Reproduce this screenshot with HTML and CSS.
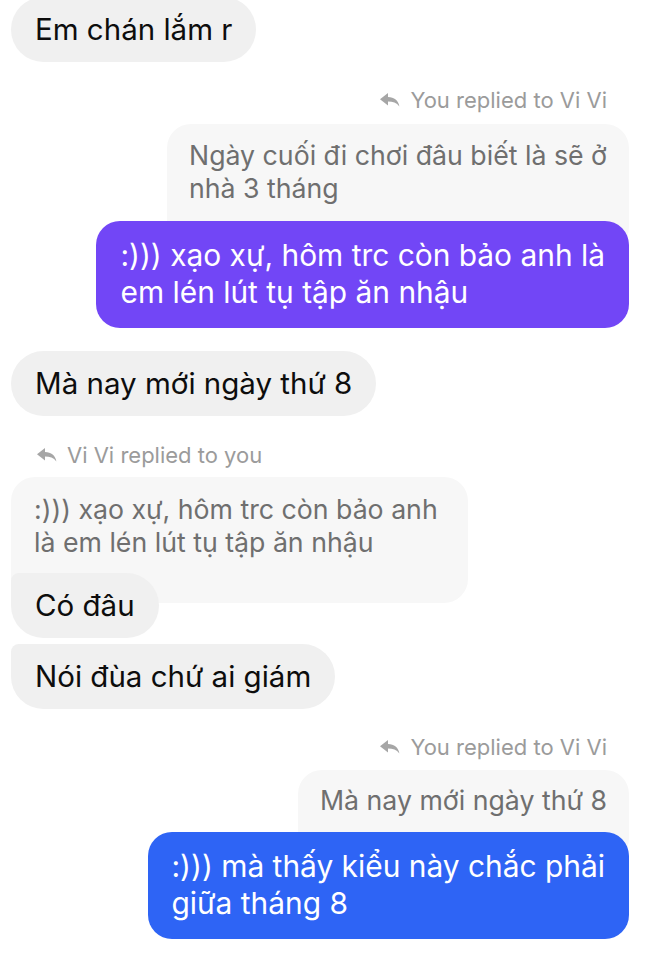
FILE: index.html
```html
<!DOCTYPE html>
<html lang="vi">
<head>
<meta charset="utf-8">
<link rel="stylesheet" href="styles.css">
</head>
<body>
<div class="chat">
  <div class="msg in first">Em chán lắm r</div>

  <div class="label out-label">
    <svg class="reply-icon" viewBox="0 0 20 14"><path d="M0 6.2 L8 0 V3.9 C14.2 4.1 18.4 7.2 19.4 13.4 C16.6 9.9 12.8 8.6 8 8.6 V12.4 Z"/></svg>
    <span>You replied to Vi Vi</span>
  </div>
  <div class="quote out-quote">Ngày cuối đi chơi đâu biết là sẽ ở<br>nhà 3 tháng</div>
  <div class="msg out purple">:))) xạo xự, hôm trc còn bảo anh là<br>em lén lút tụ tập ăn nhậu</div>

  <div class="msg in gap">Mà nay mới ngày thứ 8</div>

  <div class="label in-label">
    <svg class="reply-icon" viewBox="0 0 20 14"><path d="M0 6.2 L8 0 V3.9 C14.2 4.1 18.4 7.2 19.4 13.4 C16.6 9.9 12.8 8.6 8 8.6 V12.4 Z"/></svg>
    <span>Vi Vi replied to you</span>
  </div>
  <div class="quote in-quote">:))) xạo xự, hôm trc còn bảo anh<br>là em lén lút tụ tập ăn nhậu</div>
  <div class="msg in over">Có đâu</div>
  <div class="msg in next">Nói đùa chứ ai giám</div>

  <div class="label out-label">
    <svg class="reply-icon" viewBox="0 0 20 14"><path d="M0 6.2 L8 0 V3.9 C14.2 4.1 18.4 7.2 19.4 13.4 C16.6 9.9 12.8 8.6 8 8.6 V12.4 Z"/></svg>
    <span>You replied to Vi Vi</span>
  </div>
  <div class="quote out-quote q3">Mà nay mới ngày thứ 8</div>
  <div class="msg out blue">:))) mà thấy kiểu này chắc phải<br>giữa tháng 8</div>
</div>
</body>
</html>
```

FILE: styles.css
```css
* { box-sizing: border-box; }
html, body { margin: 0; padding: 0; background: #ffffff; }
body {
  width: 672px;
  height: 960px;
  overflow: hidden;
  font-family: Inter, "Noto Sans", "DejaVu Sans", sans-serif;
}
.chat {
  display: flex;
  flex-direction: column;
  padding: 0 43px 0 11px;
}
.msg {
  position: relative;
  z-index: 1;
  font-size: 29.5px;
  line-height: 35px;
  padding: 15px 24px;
  border-radius: 33px;
  color: #0d0d0d;
}
.msg.in {
  align-self: flex-start;
  background: #f0f0f0;
}
.msg.first { margin-top: -3px; }
.msg.gap { margin-top: 23px; }
.msg.over { margin-top: -30px; border-top-left-radius: 8px; }
.msg.next { margin-top: 6px; border-top-left-radius: 8px; }
.msg.out {
  align-self: flex-end;
  color: #ffffff;
  font-size: 29.9px;
  line-height: 37px;
  padding: 16px 24px 17px;
  border-radius: 24px;
  margin-top: -30px;
}
.purple { background: #7246f6; }
.blue { background: #2e64f5; }

.label {
  display: flex;
  align-items: center;
  gap: 10px;
  font-size: 22px;
  line-height: 24px;
  color: #9b9b9b;
  margin-top: 26px;
}
.out-label { align-self: flex-end; margin-right: 22px; }
.in-label { align-self: flex-start; margin-left: 26px; margin-top: 27px; }
.reply-icon {
  width: 20px;
  height: 14px;
  fill: #a6a6a6;
}

.quote {
  background: #f7f7f7;
  color: #6f6f6f;
  font-size: 26.7px;
  line-height: 33px;
  border-radius: 24px;
  margin-top: 12px;
}
.out-quote {
  align-self: flex-end;
  padding: 15px 22px 46px;
}
.in-quote {
  align-self: flex-start;
  padding: 16px 30px 44px 23px;
  margin-top: 10px;
}
.q3 {
  padding: 14px 22px 45px;
  margin-top: 11px;
}
```
